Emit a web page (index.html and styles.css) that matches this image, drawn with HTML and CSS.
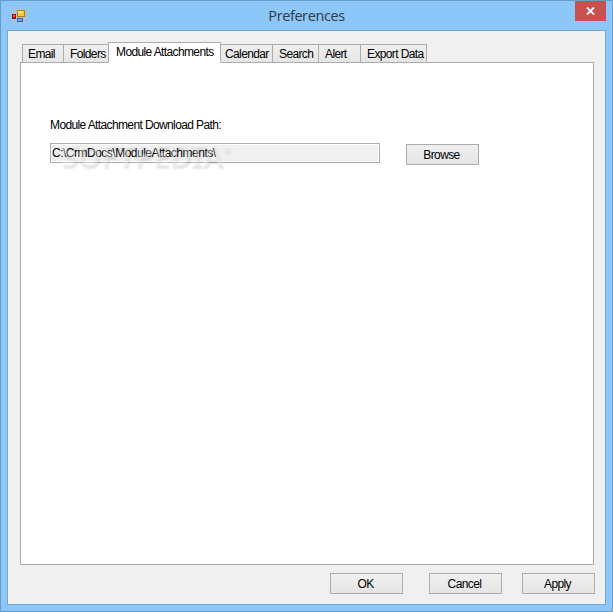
FILE: index.html
```
<!DOCTYPE html>
<html lang="en">
<head>
<meta charset="utf-8">
<title>Preferences</title>
<link rel="stylesheet" href="styles.css">
</head>
<body>
<div class="window">
  <header class="titlebar">
    <svg class="app-icon" width="14" height="14" viewBox="0 0 14 14" shape-rendering="crispEdges">
      <rect width="14" height="14" fill="#b9bfc6"/>
      <rect x="1" y="1" width="4" height="3" fill="#9dc8ee"/><rect x="1" y="10" width="4" height="3" fill="#9dc8ee"/>
      <rect x="0" y="5" width="4" height="5" fill="#a80c08"/><rect x="1" y="6" width="2" height="2" fill="#e86050"/>
      <rect x="5" y="1" width="8" height="7" fill="#b77b08"/><rect x="6" y="2" width="6" height="5" fill="#fbc936"/><rect x="6" y="2" width="4" height="2" fill="#ffe889"/>
      <rect x="5" y="9" width="6" height="4" fill="#2861c9"/><rect x="6" y="10" width="4" height="2" fill="#78a4f5"/>
    </svg>
    <h1>Preferences</h1>
    <button class="close" aria-label="Close"><svg width="9" height="8" viewBox="0 0 9 8"><path d="M1 .5 8 7.5M8 .5 1 7.5" stroke="#fff" stroke-width="1.8"/></svg></button>
  </header>
  <main class="client">
    <nav class="tabs">
      <div class="tab email"><span>Email</span></div>
      <div class="tab folders"><span>Folders</span></div>
      <div class="tab modules active"><span>Module Attachments</span></div>
      <div class="tab calendar"><span>Calendar</span></div>
      <div class="tab search"><span>Search</span></div>
      <div class="tab alert"><span>Alert</span></div>
      <div class="tab export"><span>Export Data</span></div>
    </nav>
    <section class="panel">
      <div class="label"><span>Module Attachment Download Path:</span></div>
      <div class="path-row">
        <div class="path"><span class="value">C:\CrmDocs\ModuleAttachments\</span><span class="watermark">SOFTPEDIA<sup>®</sup></span></div>
        <button class="btn browse">Browse</button>
      </div>
    </section>
    <footer class="actions">
      <button class="btn ok">OK</button>
      <button class="btn cancel">Cancel</button>
      <button class="btn apply">Apply</button>
    </footer>
  </main>
</div>
</body>
</html>
```
FILE: styles.css
```
* { box-sizing: border-box; }
body {
  margin: 0;
  font: 12px/15px "Liberation Sans", Arial, sans-serif;
  letter-spacing: -0.62px;
  color: #000;
}
.window {
  width: 613px;
  height: 612px;
  padding: 0 6px 6px;
  border: 1px solid #6b9ac6;
  background: #8dc7fa;
}
.titlebar {
  display: grid;
  grid-template-columns: 31px 1fr 31px;
  height: 29px;
  align-items: start;
}
.app-icon { margin: 7px 0 0 4px; }
h1 {
  margin: 5px 0 0;
  font: 14.5px/20px "Open Sans", sans-serif;
  letter-spacing: -0.4px;
  text-align: center;
  color: #303a43;
}
.close {
  width: 31px;
  height: 20px;
  padding: 0;
  border: 0;
  background: #c75050;
  display: grid;
  place-items: center;
}
.client {
  height: 575px;
  padding: 11px 11px 0 12px;
  border: 1px solid #77a5d0;
  background: #f0f0f0;
}
.tabs {
  display: flex;
  align-items: flex-end;
  height: 21px;
  padding-left: 2px;
  margin-bottom: -1px;
  position: relative;
}
.tab {
  height: 19px;
  padding: 2px 0 0 5px;
  border: 1px solid #acacac;
  margin-right: -1px;
  background: linear-gradient(#f0f0f0, #e5e5e5);
  white-space: nowrap;
}
.tab.active {
  height: 21px;
  padding: 2px 0 0 7px;
  border-bottom-color: #fff;
  background: #fff;
  z-index: 1;
}
.email { width: 42px; }
.folders { width: 46px; }
.modules { width: 113px; }
.calendar { width: 53px; }
.tab.calendar { padding-left: 4px; }
.search { width: 47px; }
.alert { width: 43px; }
.export { width: 67px; }
.folders span, .search span, .alert span, .export span { margin-left: 1px; }
.app-icon { margin: 8px 0 0 5px; }
.panel {
  height: 503px;
  padding: 55px 0 0 29px;
  border: 1px solid #acacac;
  background: #fff;
}
.label { height: 25px; }
.path-row { display: flex; gap: 26px; }
.path {
  position: relative;
  width: 330px;
  height: 20px;
  padding: 2px 0 0 1px;
  border: 1px solid #abadb3;
  background: #f0f0f0;
  box-shadow: inset 0 0 0 1px #fff;
}
.value { letter-spacing: -0.5px; color: #000; }
.watermark {
  position: absolute;
  left: 10px;
  top: -4px;
  font: bold 30px/30px "Noto Sans", sans-serif;
  letter-spacing: -0.2px;
  color: rgba(255, 255, 255, .35);
  text-shadow: 1px 3px 2px rgba(0, 0, 0, .1);
}
.watermark sup {
  font-size: 9px;
  line-height: 0;
  vertical-align: 14px;
}
.btn {
  width: 73px;
  height: 21px;
  padding: 2px 2px 0 0;
  border: 1px solid #acacac;
  background: linear-gradient(#f0f0f0, #e5e5e5);
  color: #000;
  font: inherit;
  letter-spacing: -0.6px;
}
.browse { margin-top: 1px; }
.actions {
  display: flex;
  justify-content: flex-end;
  padding-top: 8px;
  margin-right: -1px;
}
.cancel { margin: 0 20px 0 26px; }
```
